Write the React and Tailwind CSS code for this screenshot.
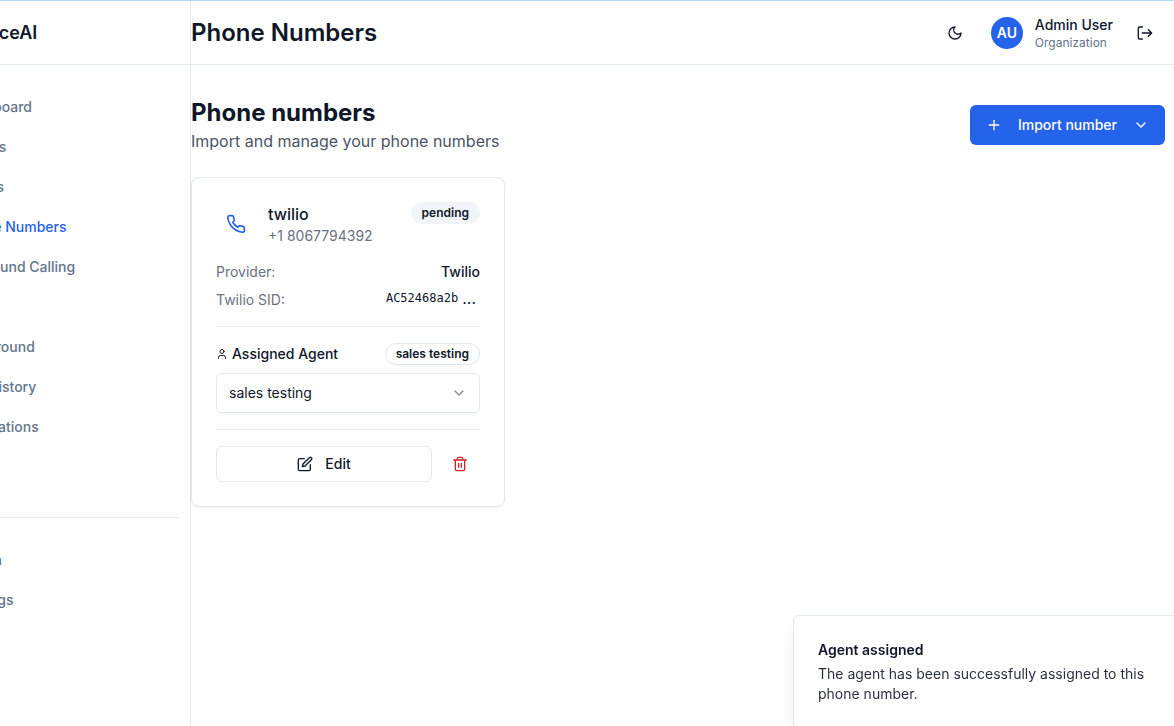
import React from "react";
import { Plus, ChevronDown } from "lucide-react";
import { LuUser } from "react-icons/lu";
import { FiEdit } from "react-icons/fi";

const nav = ["Dashboard", "Agents", "Voices", "Phone Numbers", "Outbound Calling", "SMS", "Playground", "Call History", "Integrations"];

function NavLink({ label, active }) {
  return (
    <a href="#" className={`flex h-10 items-center px-3 text-sm font-medium ${active ? "text-[#2563eb]" : "text-[#64748b]"}`}>
      {label}
    </a>
  );
}

function Icon({ className, children }) {
  return (
    <svg viewBox="0 0 24 24" fill="none" stroke="currentColor" strokeWidth={2} strokeLinecap="round" strokeLinejoin="round" className={className} aria-hidden="true">
      {children}
    </svg>
  );
}

const Moon = () => (
  <Icon className="size-4">
    <path d="M12 3a6 6 0 0 0 9 9 9 9 0 1 1-9-9Z" />
  </Icon>
);
const Logout = () => (
  <Icon className="size-4">
    <path d="M8 3H4a2 2 0 0 0-2 2v14a2 2 0 0 0 2 2h4" />
    <path d="M8 12h14M17 7l5 5-5 5" />
  </Icon>
);
const Phone = () => (
  <Icon className="size-5">
    <path d="M22 16.92v3a2 2 0 0 1-2.18 2 19.79 19.79 0 0 1-8.63-3.07 19.5 19.5 0 0 1-6-6 19.79 19.79 0 0 1-3.07-8.67A2 2 0 0 1 4.11 2h3a2 2 0 0 1 2 1.72 12.84 12.84 0 0 0 .7 2.81 2 2 0 0 1-.45 2.11L8.09 9.91a16 16 0 0 0 6 6l1.27-1.27a2 2 0 0 1 2.11-.45 12.84 12.84 0 0 0 2.81.7A2 2 0 0 1 22 16.92z" />
  </Icon>
);
const Trash = () => (
  <Icon className="size-4">
    <path d="M2.5 6h19M5 6v14a2 2 0 0 0 2 2h10a2 2 0 0 0 2-2V6M8 6V4a2 2 0 0 1 2-2h4a2 2 0 0 1 2 2v2" />
    <path d="M10 11v6M14 11v6" />
  </Icon>
);

export default function App() {
  return (
    <div className="flex min-h-screen overflow-hidden border-t border-[#b0d8fb] bg-white font-['Inter',sans-serif] text-[#0f172a]">
      <aside className="-ml-[65px] w-64 shrink-0 border-r border-[#e2e8f0]">
        <div className="flex h-16 items-center border-b border-[#e2e8f0] px-9 text-lg font-semibold">
          <span>VoiceAI</span>
        </div>
        <nav className="px-3 pt-[22px]">
          {nav.map((label) => (
            <NavLink key={label} label={label} active={label === "Phone Numbers"} />
          ))}
        </nav>
        <nav className="mx-3 mt-[70px] border-t border-[#e2e8f0] pt-[22px]">
          <NavLink label="Admin" />
          <NavLink label="Settings" />
        </nav>
      </aside>

      <div className="min-w-0 flex-1">
        <header className="flex h-16 items-center justify-between border-b border-[#e2e8f0] pr-[9px]">
          <h1 className="text-2xl font-semibold">Phone Numbers</h1>
          <div className="flex items-center gap-4">
            <button aria-label="Toggle theme" className="flex size-10 items-center justify-center">
              <Moon />
            </button>
            <div className="flex items-center gap-3">
              <div className="flex size-8 items-center justify-center rounded-full bg-[#2563eb] text-sm font-semibold text-white">AU</div>
              <div>
                <p className="text-sm leading-5 font-medium">Admin User</p>
                <p className="text-xs leading-4 text-[#64748b]">Organization</p>
              </div>
            </div>
            <button aria-label="Log out" className="-ml-1 flex size-10 items-center justify-center">
              <Logout />
            </button>
          </div>
        </header>

        <main className="pt-8 pr-[9px]">
          <div className="flex items-center justify-between">
            <div>
              <h2 className="text-2xl font-bold">Phone numbers</h2>
              <p className="text-base text-[#4b5563]">Import and manage your phone numbers</p>
            </div>
            <button className="flex h-10 items-center gap-4 rounded-md bg-[#2563eb] px-4 text-sm font-medium text-white">
              <Plus className="size-4" />
              Import number
              <ChevronDown className="size-4" />
            </button>
          </div>

          <div className="mt-6 grid grid-cols-3 gap-4">
            <article className="rounded-lg border border-[#e2e8f0] bg-white p-6 shadow-xs">
              <div className="flex items-start justify-between">
                <div className="flex items-center gap-3">
                  <div className="flex size-10 items-center justify-center text-[#2563eb]">
                    <Phone />
                  </div>
                  <div>
                    <h3 className="text-base font-medium">twilio</h3>
                    <p className="text-sm text-[#6b7280]">+1 8067794392</p>
                  </div>
                </div>
                <span className="rounded-full border border-transparent bg-[#f1f5f9] px-2.5 py-0.5 text-xs leading-4 font-semibold">pending</span>
              </div>

              <dl className="mt-4 flex flex-col gap-2 text-sm">
                <div className="flex justify-between">
                  <dt className="text-[#6b7280]">Provider:</dt>
                  <dd className="font-medium">Twilio</dd>
                </div>
                <div className="flex justify-between">
                  <dt className="text-[#6b7280]">Twilio SID:</dt>
                  <dd className="flex gap-1 pr-1 font-['DejaVu_Sans_Mono',monospace] text-xs">
                    AC52468a2b
                    <span className="font-['Inter',sans-serif] text-base leading-4">...</span>
                  </dd>
                </div>
              </dl>

              <div className="mt-4 border-t border-[#e2e8f0] pt-4">
                <div className="flex items-center justify-between">
                  <label htmlFor="agent" className="flex items-center gap-1 text-sm font-medium">
                    <LuUser className="size-3" />
                    Assigned Agent
                  </label>
                  <span className="rounded-full border border-[#e2e8f0] px-2.5 py-0.5 text-xs leading-4 font-semibold">sales testing</span>
                </div>
                <div className="relative mt-2">
                  <select id="agent" className="h-10 w-full appearance-none rounded-md border border-[#e2e8f0] bg-white px-3 text-sm">
                    <option>sales testing</option>
                  </select>
                  <ChevronDown className="pointer-events-none absolute top-3 right-[13px] size-4 opacity-50" />
                </div>
              </div>

              <div className="mt-4 flex gap-2 border-t border-[#e2e8f0] pt-4">
                <button className="flex h-9 flex-1 items-center justify-center gap-3 rounded-md border border-[#e2e8f0] text-sm font-medium">
                  <FiEdit className="size-4" />
                  Edit
                </button>
                <button aria-label="Delete" className="flex h-9 w-10 items-center justify-center text-[#dc2626]">
                  <Trash />
                </button>
              </div>
            </article>
          </div>
        </main>
      </div>

      <div role="status" className="fixed -right-[7px] -bottom-[3px] w-[388px] rounded-md border border-[#e2e8f0] bg-white p-6 pr-8 shadow-lg">
        <p className="text-sm font-semibold">Agent assigned</p>
        <p className="mt-1 text-sm opacity-90">The agent has been successfully assigned to this phone number.</p>
      </div>
    </div>
  );
}
